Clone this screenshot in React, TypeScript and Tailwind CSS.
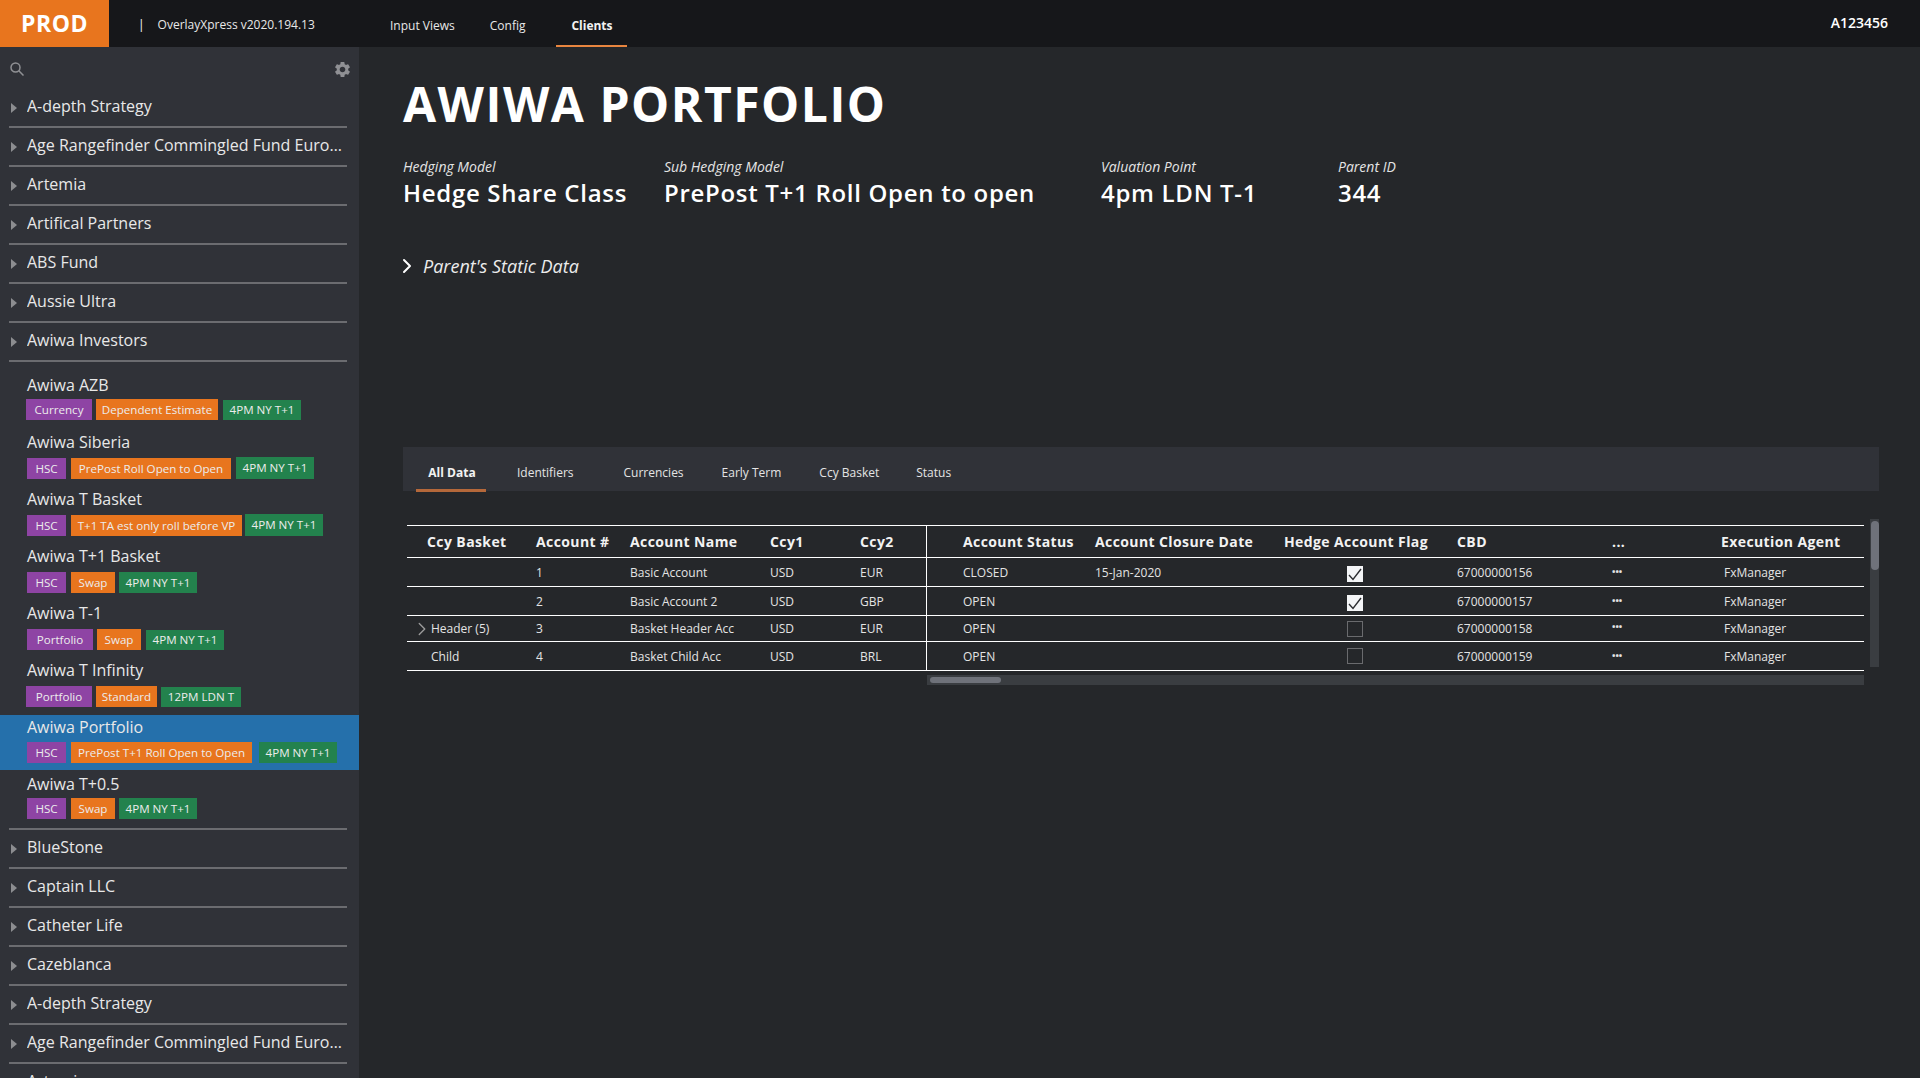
import { MdSettings } from "react-icons/md";
import { FiChevronRight } from "react-icons/fi";

type Tag = { label: string; cls: string };

const purple = "bg-[#8e44a4]";
const orange = "bg-[#e8751e]";
const green = "bg-[#23824d]";

const topClients = ["A-depth Strategy", "Age Rangefinder Commingled Fund Europe", "Artemia", "Artifical Partners", "ABS Fund", "Aussie Ultra", "Awiwa Investors"];
const bottomClients = ["BlueStone", "Captain LLC", "Catheter Life", "Cazeblanca", "A-depth Strategy", "Age Rangefinder Commingled Fund Europe", "Artemia"];

const accounts: { name: string; tagsTop: string; tags: Tag[]; selected?: boolean }[] = [
  {
    name: "Awiwa AZB",
    tagsTop: "mt-[4px]",
    tags: [
      { label: "Currency", cls: `${purple} w-[66px] ml-[-1px]` },
      { label: "Dependent Estimate", cls: `${orange} w-[122px] ml-[4px]` },
      { label: "4PM NY T+1", cls: `${green} w-[78px] ml-[5px] !h-[20px] mt-[1px]` },
    ],
  },
  {
    name: "Awiwa Siberia",
    tagsTop: "mt-[6px]",
    tags: [
      { label: "HSC", cls: `${purple} w-[39px]` },
      { label: "PrePost Roll Open to Open", cls: `${orange} w-[160px] ml-[5px]` },
      { label: "4PM NY T+1", cls: `${green} w-[78px] ml-[5px] !h-[22px] mt-[-1px]` },
    ],
  },
  {
    name: "Awiwa T Basket",
    tagsTop: "mt-[6px]",
    tags: [
      { label: "HSC", cls: `${purple} w-[39px]` },
      { label: "T+1 TA est only roll before VP", cls: `${orange} w-[171px] ml-[5px]` },
      { label: "4PM NY T+1", cls: `${green} w-[78px] ml-[3px] !h-[22px] mt-[-1px]` },
    ],
  },
  {
    name: "Awiwa T+1 Basket",
    tagsTop: "mt-[6px]",
    tags: [
      { label: "HSC", cls: `${purple} w-[39px]` },
      { label: "Swap", cls: `${orange} w-[44px] ml-[5px]` },
      { label: "4PM NY T+1", cls: `${green} w-[78px] ml-[4px]` },
    ],
  },
  {
    name: "Awiwa T-1",
    tagsTop: "mt-[6px]",
    tags: [
      { label: "Portfolio", cls: `${purple} w-[66px]` },
      { label: "Swap", cls: `${orange} w-[44px] ml-[4px]` },
      { label: "4PM NY T+1", cls: `${green} w-[78px] ml-[5px] !h-[20px] mt-[1px]` },
    ],
  },
  {
    name: "Awiwa T Infinity",
    tagsTop: "mt-[6px]",
    tags: [
      { label: "Portfolio", cls: `${purple} w-[66px] ml-[-1px]` },
      { label: "Standard", cls: `${orange} w-[61px] ml-[4px]` },
      { label: "12PM LDN T", cls: `${green} w-[80px] ml-[4px] !h-[20px] mt-[1px]` },
    ],
  },
  {
    name: "Awiwa Portfolio",
    tagsTop: "mt-[5px]",
    selected: true,
    tags: [
      { label: "HSC", cls: `${purple} w-[39px]` },
      { label: "PrePost T+1 Roll Open to Open", cls: `${orange} w-[181px] ml-[5px]` },
      { label: "4PM NY T+1", cls: `${green} w-[78px] ml-[7px]` },
    ],
  },
  {
    name: "Awiwa T+0.5",
    tagsTop: "mt-[4px]",
    tags: [
      { label: "HSC", cls: `${purple} w-[39px]` },
      { label: "Swap", cls: `${orange} w-[44px] ml-[5px]` },
      { label: "4PM NY T+1", cls: `${green} w-[78px] ml-[4px]` },
    ],
  },
];

const rows = [
  { basket: "", num: "1", name: "Basic Account", ccy1: "USD", ccy2: "EUR", status: "CLOSED", date: "15-Jan-2020", flag: true, flagCls: "mt-[2px]", cbd: "67000000156", h: "h-[29px] [&>span]:pt-[2px]" },
  { basket: "", num: "2", name: "Basic Account 2", ccy1: "USD", ccy2: "GBP", status: "OPEN", date: "", flag: true, flagCls: "mt-[2px]", cbd: "67000000157", h: "h-[29px] [&>span]:pt-[2px]" },
  { basket: "Header (5)", num: "3", name: "Basket Header Acc", ccy1: "USD", ccy2: "EUR", status: "OPEN", date: "", flag: false, flagCls: "", cbd: "67000000158", h: "h-[26px]" },
  { basket: "Child", num: "4", name: "Basket Child Acc", ccy1: "USD", ccy2: "BRL", status: "OPEN", date: "", flag: false, flagCls: "mt-[-2px]", cbd: "67000000159", h: "h-[29px] [&>span]:pt-[2px]" },
];

const gridCols = "grid grid-cols-[129px_94px_140px_90px_66px_169px_188px_146px_183px_109px_143px]";

function ClientRow({ name }: { name: string }) {
  return (
    <div className="ml-[9px] mr-[12px] h-[39px] flex items-center border-b-2 border-[#6b6c70] shrink-0">
      <span className="w-0 h-0 border-y-[5px] border-y-transparent border-l-[6px] border-l-[#8c8d90] ml-[2px] mr-[10px] shrink-0" />
      <span className="text-[16px] text-[#e8e8e8] truncate w-[316px] mb-[3px]">{name}</span>
    </div>
  );
}

function AccountItem({ name, tags, tagsTop, selected }: { name: string; tags: Tag[]; tagsTop: string; selected?: boolean }) {
  return (
    <div className={`h-[55px] mb-[2px] pl-[27px] shrink-0 ${selected ? "bg-[#2570ab]" : ""}`}>
      <div className="text-[16px] leading-[20px] pt-[2px] text-[#e8e8e8]">{name}</div>
      <div className={`flex ${tagsTop}`}>
        {tags.map((t) => (
          <span key={t.label} className={`h-[21px] flex items-center justify-center text-[11.6px] text-[#ececec] whitespace-nowrap shrink-0 ${t.cls}`}>
            {t.label}
          </span>
        ))}
      </div>
    </div>
  );
}

function Meta({ label, value, cls }: { label: string; value: string; cls: string }) {
  return (
    <div className={cls}>
      <div className="text-[14px] leading-[20px] italic text-[#e4e4e4]">{label}</div>
      <div className="text-[24px] leading-[34px] font-semibold text-white mt-[-1px] tracking-[0.7px]">{value}</div>
    </div>
  );
}

export default function App() {
  return (
    <div className="h-[1078px] w-[1920px] overflow-hidden flex flex-col bg-[#25272a] text-white font-['Open_Sans',sans-serif]">
      <header className="h-[47px] bg-[#16171a] flex items-center shrink-0">
        <div className="w-[390px] h-full flex items-center shrink-0">
          <div className="w-[109px] h-full bg-[#e8751e] flex items-center justify-center text-[23px] font-bold tracking-[0.5px]">PROD</div>
          <span className="ml-[29px] text-[12px] mt-[3px]">|</span>
          <span className="ml-[13px] text-[12px] mt-[2px] text-[#e8e8e8]">OverlayXpress v2020.194.13</span>
        </div>
        <nav className="flex h-full">
          <a className="text-[12px] pt-[17px] text-[#e8e8e8]">Input Views</a>
          <a className="text-[12px] pt-[17px] ml-[35px] text-[#e8e8e8]">Config</a>
          <a className="text-[12px] font-bold w-[71px] ml-[31px] h-full pt-[17px] text-center text-[#f2f2f2] border-b-2 border-[#e8853f]">Clients</a>
        </nav>
        <span className="ml-auto mr-[32px] text-[14px] font-semibold mb-[2px]">A123456</span>
      </header>

      <div className="flex flex-1 min-h-0">
        <aside className="w-[359px] bg-[#303238] shrink-0 flex flex-col overflow-hidden">
          <div className="h-[42px] shrink-0 flex items-center justify-between pl-[10px] pr-[7px] pt-[3px]">
            <svg viewBox="0 0 14 14" className="w-[14px] h-[14px] mb-[2px]" fill="none" stroke="#8f9094" strokeWidth="1.5">
              <circle cx="5.5" cy="5.5" r="4.5" />
              <path d="M8.8 8.8 L13.5 13.5" />
            </svg>
            <MdSettings className="text-[#8f9094] w-[19px] h-[19px]" />
          </div>
          {topClients.map((c, i) => (
            <ClientRow key={i} name={c} />
          ))}
          <div className="h-[11px] shrink-0" />
          {accounts.map((a) => (
            <AccountItem key={a.name} name={a.name} tags={a.tags} tagsTop={a.tagsTop} selected={a.selected} />
          ))}
          <div className="ml-[9px] mr-[12px] h-[2px] bg-[#6b6c70] mt-[-1px] shrink-0" />
          {bottomClients.map((c, i) => (
            <ClientRow key={i} name={c} />
          ))}
        </aside>

        <main className="flex-1 min-w-0 pl-[44px] pr-[41px]">
          <h1 className="text-[48px] leading-[64px] font-bold tracking-[1.5px] mt-[25px] text-white">AWIWA PORTFOLIO</h1>
          <div className="flex mt-[21px]">
            <Meta label="Hedging Model" value="Hedge Share Class" cls="w-[261px]" />
            <Meta label="Sub Hedging Model" value="PrePost T+1 Roll Open to open" cls="w-[437px]" />
            <Meta label="Valuation Point" value="4pm LDN T-1" cls="w-[237px]" />
            <Meta label="Parent ID" value="344" cls="w-[100px]" />
          </div>
          <div className="flex items-center mt-[43px] h-[26px]">
            <FiChevronRight className="w-[24px] h-[24px] ml-[-8px] mr-[4px]" />
            <span className="text-[18px] italic text-[#ececec]">Parent's Static Data</span>
          </div>

          <div className="mt-[168px] h-[44px] bg-[#303238] flex text-[12px] text-[#e4e4e4]">
            <div className="w-[70px] ml-[13px] h-[45px] border-b-[3px] border-[#b5683a] text-center pt-[17px] pl-[2px] font-bold text-[#f2f2f2]">All Data</div>
            <span className="ml-[31px] pt-[17px]">Identifiers</span>
            <span className="ml-[50px] pt-[17px]">Currencies</span>
            <span className="ml-[38px] pt-[17px]">Early Term</span>
            <span className="ml-[38px] pt-[17px]">Ccy Basket</span>
            <span className="ml-[37px] pt-[17px]">Status</span>
          </div>

          <div className="mt-[28px] flex">
            <div className="ml-[4px] w-[1457px]">
              <div className="mt-[6px] border-t border-white">
                <div className={`${gridCols} h-[32px] border-b border-white items-center text-[14px] font-bold tracking-[0.4px] text-[#f2f2f2] whitespace-nowrap`}>
                  <span className="pl-[20px]">Ccy Basket</span>
                  <span>Account #</span>
                  <span>Account Name</span>
                  <span>Ccy1</span>
                  <span>Ccy2</span>
                  <span className="pl-[36px] border-l border-white h-full flex items-center">Account Status</span>
                  <span>Account Closure Date</span>
                  <span className="text-center">Hedge Account Flag</span>
                  <span className="pl-[28px]">CBD</span>
                  <span>...</span>
                  <span>Execution Agent</span>
                </div>
                {rows.map((r) => (
                  <div key={r.num} className={`${gridCols} ${r.h} border-b border-white items-center text-[12px] text-[#e4e4e4]`}>
                    <span className="pl-[24px] relative">
                      {r.basket === "Header (5)" && <FiChevronRight strokeWidth={1.5} className="absolute left-[4px] top-[-2px] w-[22px] h-[22px] text-[#9a9a9a]" />}
                      {r.basket}
                    </span>
                    <span>{r.num}</span>
                    <span>{r.name}</span>
                    <span>{r.ccy1}</span>
                    <span>{r.ccy2}</span>
                    <span className="pl-[36px] border-l border-white h-full flex items-center">{r.status}</span>
                    <span>{r.date}</span>
                    <span className="flex justify-center pr-[2px]">
                      {r.flag ? (
                        <span className={`w-[16px] h-[16px] bg-[#f4f5f7] flex items-center justify-center ${r.flagCls}`}>
                          <svg viewBox="0 0 16 16" className="w-[16px] h-[16px]" fill="none" stroke="#2b2c30" strokeWidth="1.4">
                            <path d="M2 9 L6 13.5 L14 3" />
                          </svg>
                        </span>
                      ) : (
                        <span className={`w-[16px] h-[16px] border border-[#6a6b6e] ${r.flagCls}`} />
                      )}
                    </span>
                    <span className="pl-[28px]">{r.cbd}</span>
                    <span className="text-[9px] font-bold mb-[3px]">•••</span>
                    <span className="pl-[3px]">FxManager</span>
                  </div>
                ))}
              </div>
              <div className="ml-[520px] mt-[4px] h-[10px] bg-[#3a3d41] flex items-center pl-[3px]">
                <div className="w-[71px] h-[6px] rounded-full bg-[#6f727a]" />
              </div>
            </div>
            <div className="ml-[6px] w-[11px] h-[148px] bg-[#3a3d41] pt-[2px] flex justify-center">
              <div className="w-[8px] h-[49px] rounded-full bg-[#6f727a]" />
            </div>
          </div>
        </main>
      </div>
    </div>
  );
}
